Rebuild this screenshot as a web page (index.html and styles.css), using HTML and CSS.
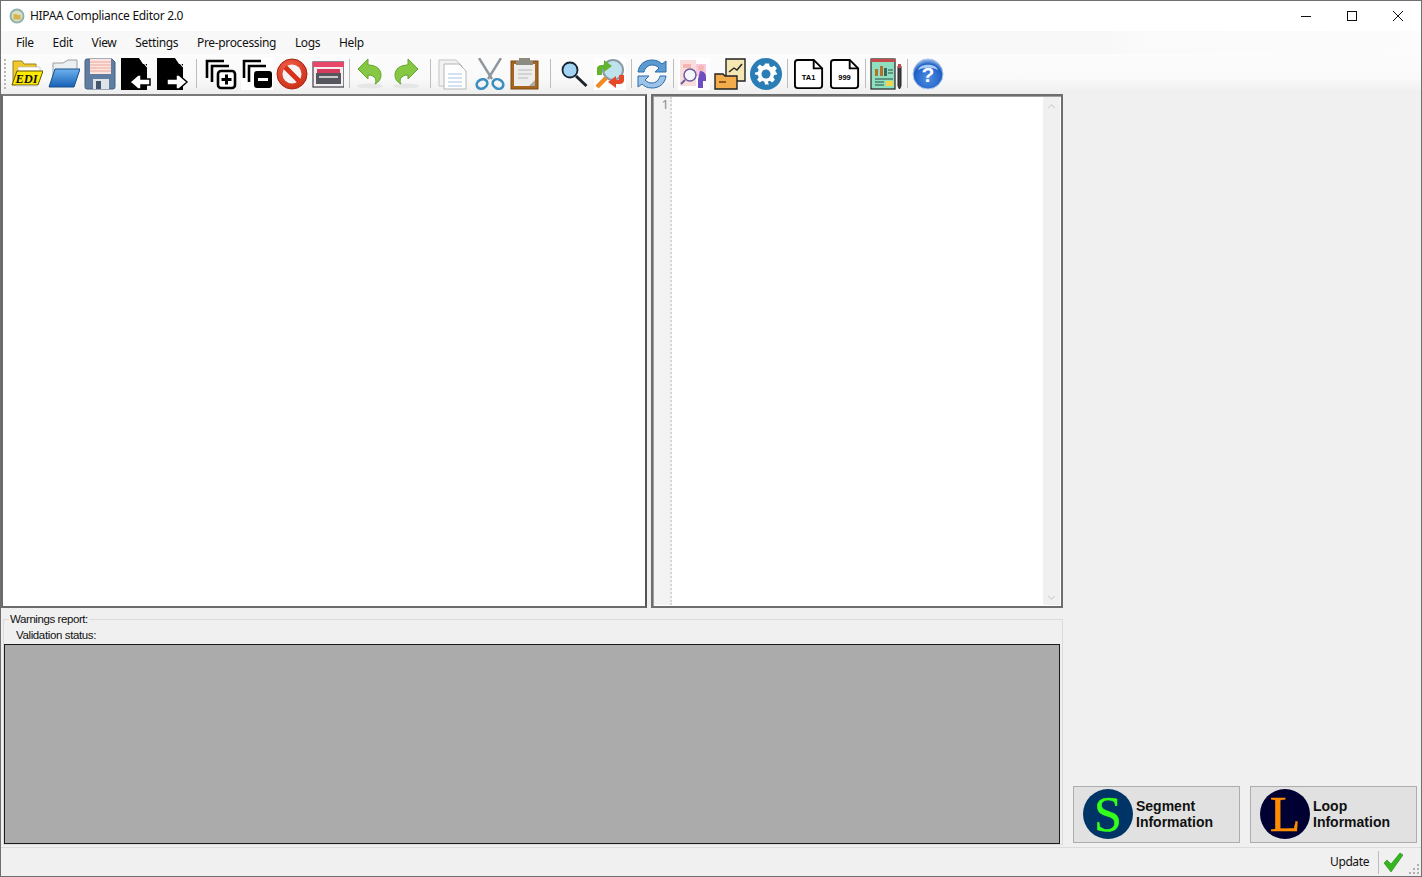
FILE: index.html
```html
<!DOCTYPE html>
<html lang="en">
<head>
<meta charset="utf-8">
<title>HIPAA Compliance Editor 2.0</title>
<link rel="stylesheet" href="styles.css">
</head>
<body>
<div class="window">
  <header class="titlebar">
    <svg class="appicon" viewBox="0 0 16 16"><circle cx="8" cy="8" r="7.5" fill="#8fb3a8"/><circle cx="8" cy="8" r="5.5" fill="#d8e0c8"/><path d="M4.5 6h3l1 1h3v4.5h-7z" fill="#d9b24a"/></svg>
    <span class="apptitle">HIPAA Compliance Editor 2.0</span>
    <div class="winctl">
      <span class="winbtn"><svg viewBox="0 0 12 12"><path d="M1 6.5h10" stroke="#111" fill="none"/></svg></span>
      <span class="winbtn"><svg viewBox="0 0 12 12"><rect x="1.5" y="1.5" width="9" height="9" stroke="#111" fill="none"/></svg></span>
      <span class="winbtn"><svg viewBox="0 0 12 12"><path d="M1 1l10 10M11 1L1 11" stroke="#111" fill="none"/></svg></span>
    </div>
  </header>

  <nav class="menubar">
    <span class="menuitem">File</span>
    <span class="menuitem">Edit</span>
    <span class="menuitem">View</span>
    <span class="menuitem">Settings</span>
    <span class="menuitem">Pre-processing</span>
    <span class="menuitem">Logs</span>
    <span class="menuitem">Help</span>
  </nav>

  <div class="toolbar">
    <span class="grip"></span>
    <div class="tgroup g-wide">
      <svg class="ico" viewBox="0 0 32 32"><path d="M2 6V3h9l2 3h12v18H2z" fill="#f0c72c" stroke="#9a8420"/><path d="M7 9h22v12H7z" fill="#fff" stroke="#bbb" stroke-width=".6"/><path d="M6 13h26l-5 14H1z" fill="#ffea00" stroke="#5f5200"/><path d="M5 28h22" stroke="#cfcfcf"/><text x="15.500" y="25" class="edi">EDI</text></svg>
      <svg class="ico" viewBox="0 0 32 32"><defs><linearGradient id="fb" x1="0" y1="0" x2="0" y2="1"><stop offset="0" stop-color="#6fb2ee"/><stop offset="1" stop-color="#1560b8"/></linearGradient></defs><path d="M5 8V5h10l5-3h9v16H5z" fill="#eceff1" stroke="#9a9fa4"/><path d="M7 11h25l-6 18H1z" fill="url(#fb)" stroke="#1c4f8a"/></svg>
      <svg class="ico" viewBox="0 0 32 32"><path d="M1 3a2 2 0 0 1 2-2h25l3 3v25a2 2 0 0 1-2 2H3a2 2 0 0 1-2-2z" fill="#5f7da1" stroke="#465e7c"/><path d="M6 1h21v15H6z" fill="#fde4de"/><path d="M6 4h21M6 7h21M6 10h21M6 13h21" stroke="#e8a79c"/><path d="M9 21h16v10H9z" fill="#dfe3e8"/><path d="M12 23h5v8h-5z" fill="#44566d"/></svg>
      <svg class="ico" viewBox="0 0 32 32"><path d="M0 0h18l4 6h4v26H0z" fill="#000"/><path d="M19 0l7 9" stroke="#fff" stroke-width="1.200"/><path d="M20 21h9v6h-9v4h-3l-8-7 8-7h3z" fill="#fff" stroke="#000" stroke-width="1.500"/></svg>
      <svg class="ico" viewBox="0 0 32 32"><path d="M0 0h18l4 6h4v26H0z" fill="#000"/><path d="M19 0l7 9" stroke="#fff" stroke-width="1.200"/><path d="M10 21h9v-4h3l8 7-8 7h-3v-4h-9z" fill="#fff" stroke="#000" stroke-width="1.500"/></svg>
    </div>
    <span class="sep s-a"></span>
    <div class="tgroup g-tight">
      <svg class="ico" viewBox="0 0 32 32"><path d="M2 20V3h17M7 24V8h17" fill="none" stroke="#000" stroke-width="2.600"/><rect x="13" y="13" width="17" height="17" rx="3" fill="#fff" stroke="#000" stroke-width="2.600"/><path d="M21.500 16.500v10M16.500 21.500h10" stroke="#000" stroke-width="3"/></svg>
      <svg class="ico icowhite" viewBox="0 0 32 32"><path d="M3 20V3h17M8 24V8h17" fill="none" stroke="#000" stroke-width="2.600"/><rect x="13" y="13" width="18" height="17" rx="3" fill="#000"/><path d="M17 21.500h10" stroke="#fff" stroke-width="3"/></svg>
      <svg class="ico" viewBox="0 0 32 32"><defs><radialGradient id="st" cx=".4" cy=".3" r=".8"><stop offset="0" stop-color="#f2604a"/><stop offset="1" stop-color="#c92a12"/></radialGradient></defs><circle cx="16" cy="16" r="15" fill="url(#st)" stroke="#a82410"/><circle cx="16" cy="16" r="9.500" fill="#f4f4f4"/><path d="M9 9l14 14" stroke="#d9301a" stroke-width="5"/></svg>
      <svg class="ico" viewBox="0 0 32 32"><rect x="1" y="4" width="31" height="25" fill="#f4eef0" stroke="#3f3f46" stroke-width="1.200"/><path d="M1 4h31v5H1z" fill="#e8476a"/><path d="M5 11h23v5H5z" fill="#d63b5e"/><path d="M4 15h25v11H4z" fill="#55565e"/><path d="M7 19h19" stroke="#c9c9c9" stroke-width="2"/></svg>
    </div>
    <span class="sep s-b"></span>
    <div class="tgroup">
      <svg class="ico" viewBox="0 0 32 32"><ellipse cx="15" cy="28" rx="13" ry="2.500" fill="#e6e6e6"/><path d="M3 11l10-10v6c8 0 13 4 13 10 0 4-2 7-6 9 2-3 1-9-7-9v4z" fill="#86c843" stroke="#63a52a"/></svg>
      <svg class="ico" viewBox="0 0 32 32"><ellipse cx="15" cy="28" rx="13" ry="2.500" fill="#e6e6e6"/><path d="M27 11L17 1v6C9 7 4 11 4 17c0 4 2 7 6 9-2-3-1-9 7-9v4z" fill="#86c843" stroke="#63a52a"/></svg>
    </div>
    <span class="sep s-c"></span>
    <div class="tgroup">
      <svg class="ico" viewBox="0 0 32 32"><path d="M1 2h17l6 6v20H1z" fill="#f2f2f2" stroke="#c4c4c4"/><path d="M6 6h15l7 7v18H6z" fill="#fff" stroke="#b5b5b5"/><path d="M10 16h14M10 20h14M10 24h14M10 28h14" stroke="#a9c3dc"/></svg>
      <svg class="ico" viewBox="0 0 32 32"><path d="M5 0l13 21M27 0L14 21" stroke="#8f979e" stroke-width="2.400" fill="none"/><ellipse cx="8" cy="26" rx="5.500" ry="4.500" transform="rotate(-30 8 26)" fill="none" stroke="#3b8fc0" stroke-width="2.600"/><ellipse cx="24" cy="26" rx="5.500" ry="4.500" transform="rotate(30 24 26)" fill="none" stroke="#3b8fc0" stroke-width="2.600"/></svg>
      <svg class="ico" viewBox="0 0 32 32"><rect x="1" y="3" width="27" height="28" fill="#a5651f" stroke="#7b4a14"/><path d="M4 6h21v22H4z" fill="#ededed"/><path d="M9 0h11v3h3v4H6V3h3z" fill="#8b8b80"/><path d="M8 12h14M8 16h14M8 20h10" stroke="#b9b9b9"/><path d="M19 28l6-6v6z" fill="#a9a9a9"/></svg>
    </div>
    <span class="sep s-d"></span>
    <div class="tgroup">
      <svg class="ico" viewBox="0 0 32 32"><circle cx="12" cy="12" r="7.500" fill="#a4d4f4" stroke="#17242e" stroke-width="1.800"/><path d="M18 18l10.500 10" stroke="#17242e" stroke-width="3"/></svg>
      <svg class="ico icowhite" viewBox="0 0 32 32"><circle cx="19" cy="12" r="10" fill="#bfe3ee" stroke="#8c9aa3" stroke-width="2"/><path d="M12 20L3 29" stroke="#f08a24" stroke-width="4.500"/><path d="M3 17v-6c0-3 2-4 5-4h2V2l8 6-8 6v-3H8v6z" fill="#64b32e"/><path d="M30 17v5c0 3-2 4-5 4h-3v4l-8-6 8-6v4h3v-5z" fill="#e8482a"/></svg>
    </div>
    <span class="sep s-f"></span>
    <div class="tgroup">
      <svg class="ico" viewBox="0 0 32 32"><path d="M2 14C3 6 9 2 16 2c5 0 8 2 10 4l4-3v11H19l4-4c-2-2-4-3-7-3-4 0-7 3-8 7z" fill="#5c9ad2" stroke="#2e6ca8"/><path d="M30 18c-1 8-7 12-14 12-5 0-8-2-10-4l-4 3V18h11l-4 4c2 2 4 3 7 3 4 0 7-3 8-7z" fill="#9cc4e8" stroke="#2e6ca8"/></svg>
    </div>
    <span class="sep s-f"></span>
    <div class="tgroup">
      <svg class="ico icowhite" viewBox="0 0 32 32"><path d="M2 2h16v26H2z" fill="#fbdcdc"/><path d="M18 6h10v12H18z" fill="#f7c8e0"/><path d="M5 6h8v4H5z" fill="#f6b6b0"/><circle cx="12" cy="17" r="6" fill="#f4f4fb" stroke="#6a5a9c" stroke-width="1.500"/><path d="M7 22l-4 4" stroke="#6a5a9c" stroke-width="2"/><path d="M22 13c4 0 6 3 6 6v4h-3v7h-5v-9z" fill="#6d4fc0"/><circle cx="23" cy="10" r="3" fill="#f4b8b0"/></svg>
      <svg class="ico" viewBox="0 0 32 32"><path d="M12 1h19v22H12z" fill="#f5e7b4" stroke="#222" stroke-width="1.400"/><path d="M15 14l5-4 3 2 5-6" fill="none" stroke="#222" stroke-width="1.400"/><path d="M1 16h8l2 2h12v13H1z" fill="#f2ac4c" stroke="#222" stroke-width="1.400"/><path d="M5 23h7v2H5z" fill="#8c5a1c"/></svg>
      <svg class="ico" viewBox="0 0 32 32"><circle cx="16" cy="16" r="16" fill="#2b7db5"/><path d="M14 6h4l.6 2.800 2.200.9 2.400-1.600 2.700 2.700-1.600 2.400.9 2.200L26 15v2l-2.800.6-.9 2.200 1.600 2.400-2.700 2.700-2.400-1.600-2.200.9L18 27h-4l-.6-2.800-2.200-.9-2.400 1.600-2.700-2.700 1.600-2.400-.9-2.200L4 17v-2l2.800-.6.9-2.200-1.600-2.400 2.700-2.700 2.400 1.600 2.200-.9z" fill="#fff" transform="translate(1 -.5)"/><circle cx="16" cy="16" r="4.500" fill="#2b7db5"/></svg>
    </div>
    <span class="sep s-g"></span>
    <div class="tgroup g-doc">
      <svg class="ico doc" viewBox="0 0 32 32"><path d="M4 1h17l9 9v18a3 3 0 0 1-3 3H4a3 3 0 0 1-3-3V4a3 3 0 0 1 3-3z" fill="#fff" stroke="#000" stroke-width="2"/><path d="M21 1v9h9" fill="none" stroke="#000" stroke-width="2"/><text x="15.500" y="22" class="doctext">TA1</text></svg>
      <svg class="ico doc" viewBox="0 0 32 32"><path d="M4 1h17l9 9v18a3 3 0 0 1-3 3H4a3 3 0 0 1-3-3V4a3 3 0 0 1 3-3z" fill="#fff" stroke="#000" stroke-width="2"/><path d="M21 1v9h9" fill="none" stroke="#000" stroke-width="2"/><text x="15.500" y="22" class="doctext">999</text></svg>
    </div>
    <span class="sep s-f"></span>
    <div class="tgroup">
      <svg class="ico" viewBox="0 0 32 32"><rect x="1" y="1" width="24" height="30" fill="#8fe0c0" stroke="#222" stroke-width="1.200"/><path d="M1 1h24v3H1z" fill="#c74a4a"/><path d="M5 11h3v7H5zM10 8h3v10h-3z" fill="#b5712c"/><path d="M14 10h3v8h-3z" fill="#3a6a5c"/><path d="M18 12h5M18 15h5M5 21h18M5 24h9M5 27h9" stroke="#2a4a44"/><rect x="16" y="23" width="7" height="5" fill="#f6d54a"/><path d="M28 8v20l1.500 3 1.500-3V8z" fill="#444" stroke="#222"/><path d="M28 6h3v4h-3z" fill="#c74a4a"/></svg>
    </div>
    <span class="sep s-f"></span>
    <div class="tgroup">
      <svg class="ico" viewBox="0 0 32 32"><defs><radialGradient id="hp" cx=".5" cy=".65" r=".6"><stop offset="0" stop-color="#4f8fe6"/><stop offset=".8" stop-color="#1f5fc4"/><stop offset="1" stop-color="#7fa8e0"/></radialGradient></defs><circle cx="16" cy="16" r="15" fill="url(#hp)" stroke="#a9c4e8"/><path d="M6 12C8 5 24 5 26 12c-6-3-14-3-20 0z" fill="#a9ccf4"/><text x="16" y="24" class="help">?</text></svg>
    </div>
  </div>

  <main class="workarea">
    <div class="leftcol">
      <div class="panes">
        <div class="treepane"></div>
        <div class="editor">
          <div class="gutter"><span class="lineno">1</span></div>
          <div class="codearea"></div>
          <div class="vscroll">
            <svg viewBox="0 0 10 6"><path d="M1 5l4-4 4 4" fill="none" stroke="#d4d4d4" stroke-width="1.400"/></svg>
            <svg viewBox="0 0 10 6"><path d="M1 1l4 4 4-4" fill="none" stroke="#d4d4d4" stroke-width="1.400"/></svg>
          </div>
        </div>
      </div>
      <fieldset class="report">
        <legend class="reportlegend">Warnings report:</legend>
        <div class="statuslabel">Validation status:</div>
        <div class="mdiarea"></div>
      </fieldset>
    </div>
    <div class="rightcol">
      <button class="infobtn" type="button">
        <span class="badge badge-s">S</span>
        <span class="infotext">Segment<br>Information</span>
      </button>
      <button class="infobtn" type="button">
        <span class="badge badge-l">L</span>
        <span class="infotext">Loop<br>Information</span>
      </button>
    </div>
  </main>

  <footer class="statusbar">
    <span class="update">Update</span>
    <span class="statussep"></span>
    <svg class="tick" viewBox="0 0 20 20"><path d="M1 11l3-3 4 4 9-11 3 2L8 20z" fill="#35b51e" stroke="#1f8a10" stroke-width=".6"/></svg>
    <svg class="sizegrip" viewBox="0 0 12 12"><path d="M9 1h2v2H9zM5 5h2v2H5zM9 5h2v2H9zM1 9h2v2H1zM5 9h2v2H5zM9 9h2v2H9z" fill="#b0b0b0"/></svg>
  </footer>
</div>
</body>
</html>
```
FILE: styles.css
```css
* { box-sizing: border-box; }
html, body { margin: 0; height: 100%; overflow: hidden; }
body { background: #f0f0f0; font-family: "Noto Sans", "Open Sans", sans-serif; font-size: 12px; color: #111; }

.window { width: 1422px; height: 877px; border: 1px solid #6f6f6f; display: flex; flex-direction: column; background: #f0f0f0; }

.titlebar { height: 30px; flex: none; background: #fff; display: flex; align-items: center; padding-left: 8px; }
.appicon { width: 16px; height: 16px; flex: none; }
.apptitle { margin-left: 5px; font-size: 12px; line-height: 16px; letter-spacing: -.3px; }
.winctl { margin-left: auto; display: flex; height: 100%; }
.winbtn { width: 46px; display: flex; align-items: center; justify-content: center; }
.winbtn svg { width: 12px; height: 12px; }

.menubar { height: 23px; flex: none; display: flex; align-items: center; padding-left: 5.500px; background: linear-gradient(90deg, #f8f8f8 0, #f8f8f8 78%, #fafafa 80%, #fcfcfc 100%); }
.menuitem { padding: 0 9.450px; line-height: 16px; font-size: 12px; letter-spacing: -.35px; }

.toolbar { height: 40px; flex: none; display: flex; align-items: center; padding: 0 0 1px 3px; background: linear-gradient(180deg, #fcfcfc 0, #f9f9f9 62%, #eeeeee 100%); }
.grip { width: 2px; height: 30px; border-left: 2px dotted #b8b8b8; margin-right: 5px; flex: none; }
.tgroup { display: flex; gap: 4px; align-items: center; }
.g-wide { gap: 4.500px; }
.g-tight { gap: 3.500px; }
.g-doc { gap: 6px; }
.ico { width: 32px; height: 32px; display: block; flex: none; }
.doc { width: 30px; }
.icowhite { background: #fff; }
.sep { width: 1px; height: 29px; background: #bdbdbd; flex: none; }
.s-a { margin: 0 8px 0 7px; }
.s-b { margin: 0 5px 0 5.500px; }
.s-c { margin: 0 7px 0 7px; }
.s-d { margin: 0 7px 0 8px; }
.s-f { margin: 0 4px 0 5px; }
.s-g { margin: 0 6px 0 5px; }
.edi { font: italic bold 12.500px "Liberation Serif", serif; text-anchor: middle; fill: #111; }
.doctext { font: bold 8px "Liberation Sans", sans-serif; text-anchor: middle; fill: #000; }
.help { font: bold 21px "Liberation Sans", sans-serif; text-anchor: middle; fill: #fff; }

.workarea { flex: 1; min-height: 0; display: flex; background: #f0f0f0; }
.leftcol { width: 1062px; flex: none; display: flex; flex-direction: column; }
.panes { height: 514px; flex: none; display: flex; gap: 4px; }
.treepane { width: 646px; background: #fff; border: 2px solid #6b6b6b; border-right-color: #555; border-top-color: #7a7a7a; }
.editor { flex: 1; min-width: 0; display: flex; background: #fff; border: 2px solid #6e6e6e; padding: 1px; box-shadow: inset 1px 1px 0 #a0a0a0; }
.gutter { width: 18px; flex: none; background: #f3f3f3; border-right: 2px dotted #d6d6d6; text-align: right; padding-right: 1px; }
.lineno { font-size: 13px; line-height: 14px; color: #8a8a8a; display: block; }
.codearea { flex: 1; background: #fff; }
.vscroll { width: 17px; flex: none; background: #f0f0f0; display: flex; flex-direction: column; justify-content: space-between; align-items: center; padding: 7px 0 5px; }
.vscroll svg { width: 9px; height: 5px; }

.report { margin: 3px 0 0 2px; padding: 0; border: 1px solid #dcdcdc; height: 234px; min-width: 0; }
.reportlegend { margin-left: 5px; padding: 0 1px; font: 11.500px/16px "Liberation Sans", sans-serif; letter-spacing: -.42px; color: #111; }
.statuslabel { font: 11.500px/16px "Liberation Sans", sans-serif; letter-spacing: -.37px; padding-left: 12px; height: 17px; }
.mdiarea { height: 200px; width: 1056px; background: #ababab; border: 1px solid #1a1a1a; }

.rightcol { flex: 1; display: flex; align-items: flex-end; gap: 10px; padding: 0 0 4px 10px; }
.infobtn { width: 167px; height: 57px; padding: 0 0 2px 9px; display: flex; align-items: center; background: #e1e1e1; border: 1px solid #adadad; font: bold 14px/16px "Liberation Sans", sans-serif; color: #111; text-align: left; }
.badge { width: 50px; height: 50px; border-radius: 50%; flex: none; display: flex; align-items: center; justify-content: center; font: 50px/50px "Liberation Serif", serif; -webkit-text-stroke: .5px currentColor; }
.badge-s { background: #003366; color: #33ff1a; }
.badge-l { background: #000033; color: #ff8c00; }
.infotext { margin-left: 3px; }

.statusbar { height: 29px; flex: none; display: flex; align-items: center; justify-content: flex-end; border-top: 1px solid #dcdcdc; background: #f0f0f0; padding-right: 1px; }
.update { font-size: 12px; line-height: 16px; letter-spacing: -.4px; }
.statussep { width: 1px; height: 23px; background: #bdbdbd; margin: 0 4px 0 9px; }
.tick { width: 20px; height: 20px; }
.sizegrip { width: 12px; height: 12px; margin: 13px 0 0 5px; }
```
